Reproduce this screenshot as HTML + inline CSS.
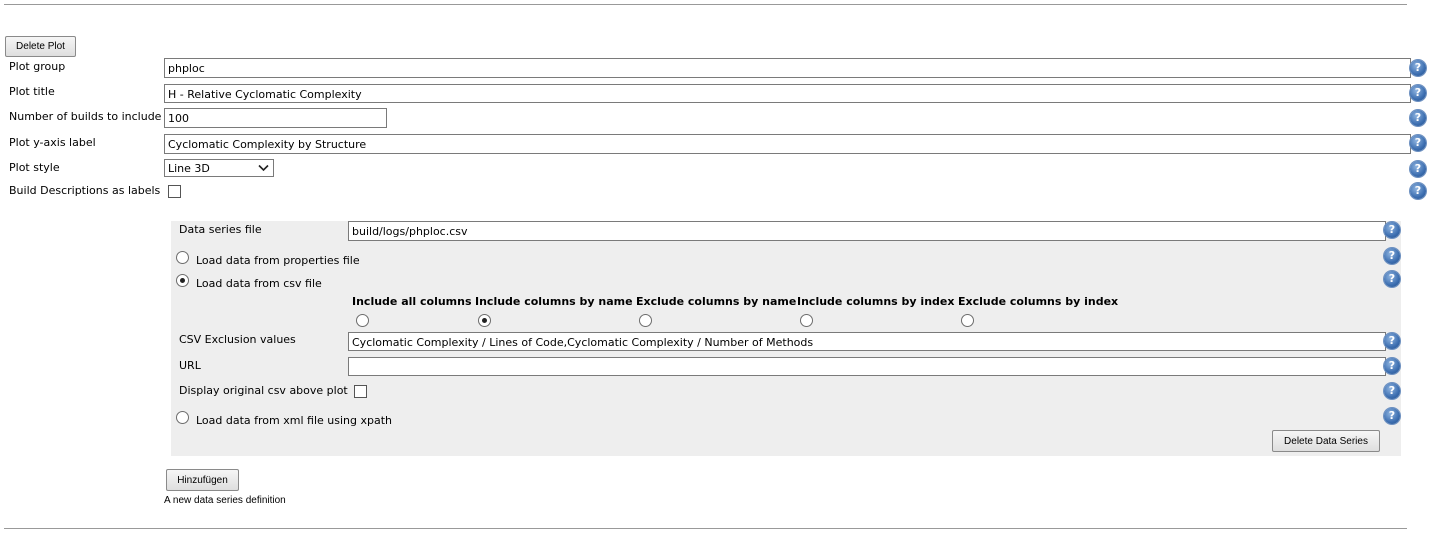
<!DOCTYPE html>
<html><head><meta charset="utf-8"><style>
body{margin:0;width:1430px;height:533px;background:#fff;position:relative;font-family:"DejaVu Sans",Verdana,sans-serif;font-size:11px;color:#000;overflow:hidden}
.a{position:absolute;white-space:nowrap;margin-top:1px}
.hr{position:absolute;left:4px;width:1403px;height:1px;background:#999}
.in{position:absolute;box-sizing:border-box;border:1px solid #7a7a7a;background:#fff;padding:3px 3px 1px;font-size:11px;line-height:14px;white-space:nowrap;overflow:hidden}
.btn{position:absolute;box-sizing:border-box;border:1px solid #8a8a8a;border-radius:2px;background:linear-gradient(#f6f6f6,#dedede);font-family:"Liberation Sans",Arial,sans-serif;font-size:10px;text-align:center}
.h{position:absolute;width:16px;height:16px;border-radius:50%;background:radial-gradient(circle at 40% 35%,#8fb4e0,#3c6eb0 60%,#244f8a);box-shadow:0 0 0 1px #6b8fc0;color:#fff;font:bold 11px/16px "DejaVu Sans",sans-serif;text-align:center}
.r{position:absolute;width:11px;height:11px;border:1px solid #6d6d6d;border-radius:50%;background:#fff}
.r.on::after{content:"";position:absolute;left:3px;top:3px;width:5px;height:5px;border-radius:50%;background:#222}
.cb{position:absolute;width:11px;height:11px;border:1px solid #555;background:#fff}
b{font-weight:bold}
</style></head><body>
<div class="hr" style="top:4px"></div>
<div class="hr" style="top:528px"></div>
<div class="btn" style="left:5px;top:36px;width:71px;height:21px;line-height:20px">Delete Plot</div>

<div class="a" style="left:9px;top:59px">Plot group</div>
<div class="in" style="left:164px;top:58px;width:1247px;height:20px">phploc</div>
<div class="h" style="left:1410px;top:60px">?</div>

<div class="a" style="left:9px;top:84px">Plot title</div>
<div class="in" style="left:164px;top:84px;width:1247px;height:19px">H - Relative Cyclomatic Complexity</div>
<div class="h" style="left:1410px;top:85px">?</div>

<div class="a" style="left:9px;top:109px">Number of builds to include</div>
<div class="in" style="left:164px;top:108px;width:223px;height:20px">100</div>
<div class="h" style="left:1410px;top:110px">?</div>

<div class="a" style="left:9px;top:135px">Plot y-axis label</div>
<div class="in" style="left:164px;top:134px;width:1247px;height:20px">Cyclomatic Complexity by Structure</div>
<div class="h" style="left:1410px;top:135px">?</div>

<div class="a" style="left:9px;top:160px">Plot style</div>
<div class="in" style="left:164px;top:159px;width:110px;height:18px;padding:2px 3px 0;line-height:14px">Line 3D<svg style="position:absolute;right:4px;top:4px" width="11" height="8"><path d="M1 1.5L5.5 6L10 1.5" stroke="#222" stroke-width="1.6" fill="none"/></svg></div>
<div class="h" style="left:1410px;top:161px">?</div>

<div class="a" style="left:9px;top:183px">Build Descriptions as labels</div>
<div class="cb" style="left:168px;top:185px"></div>
<div class="h" style="left:1410px;top:183px">?</div>

<div style="position:absolute;left:171px;top:221px;width:1230px;height:235px;background:#eeeeee"></div>
<div class="a" style="left:179px;top:222px">Data series file</div>
<div class="in" style="left:348px;top:221px;width:1038px;height:20px">build/logs/phploc.csv</div>
<div class="h" style="left:1384px;top:222px">?</div>

<div class="r" style="left:176px;top:251px"></div>
<div class="a" style="left:196px;top:253px">Load data from properties file</div>
<div class="h" style="left:1384px;top:248px">?</div>

<div class="r on" style="left:176px;top:274px"></div>
<div class="a" style="left:196px;top:276px">Load data from csv file</div>
<div class="h" style="left:1384px;top:271px">?</div>

<div class="a" style="left:352px;top:294px"><b>Include all columns</b></div>
<div class="a" style="left:475px;top:294px"><b>Include columns by name</b></div>
<div class="a" style="left:636px;top:294px"><b>Exclude columns by name</b></div>
<div class="a" style="left:797px;top:294px"><b>Include columns by index</b></div>
<div class="a" style="left:958px;top:294px"><b>Exclude columns by index</b></div>
<div class="r" style="left:356px;top:314px"></div>
<div class="r on" style="left:478px;top:314px"></div>
<div class="r" style="left:639px;top:314px"></div>
<div class="r" style="left:800px;top:314px"></div>
<div class="r" style="left:961px;top:314px"></div>

<div class="a" style="left:179px;top:332px">CSV Exclusion values</div>
<div class="in" style="left:348px;top:332px;width:1038px;height:19px">Cyclomatic Complexity / Lines of Code,Cyclomatic Complexity / Number of Methods</div>
<div class="h" style="left:1384px;top:333px">?</div>

<div class="a" style="left:179px;top:358px">URL</div>
<div class="in" style="left:348px;top:357px;width:1038px;height:19px"></div>
<div class="h" style="left:1384px;top:358px">?</div>

<div class="a" style="left:179px;top:383px">Display original csv above plot</div>
<div class="cb" style="left:354px;top:385px"></div>
<div class="h" style="left:1384px;top:383px">?</div>

<div class="r" style="left:176px;top:411px"></div>
<div class="a" style="left:196px;top:413px">Load data from xml file using xpath</div>
<div class="h" style="left:1384px;top:408px">?</div>

<div class="btn" style="left:1272px;top:430px;width:108px;height:22px;line-height:21px">Delete Data Series</div>

<div class="btn" style="left:166px;top:469px;width:73px;height:22px;line-height:21px">Hinzufügen</div>
<div class="a" style="left:164px;top:494px;font-family:'Liberation Sans',Arial,sans-serif;font-size:10px">A new data series definition</div>
</body></html>
